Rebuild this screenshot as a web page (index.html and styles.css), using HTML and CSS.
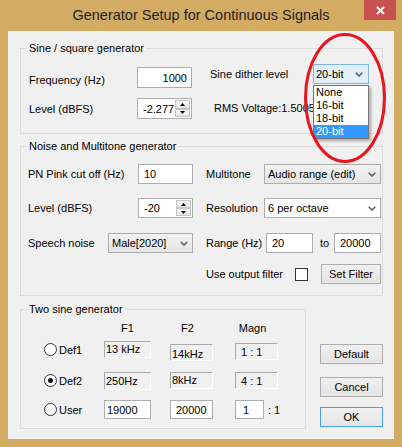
FILE: index.html
```html
<!DOCTYPE html>
<html lang="en">
<head>
    <meta charset="UTF-8">
    <title>Generator Setup for Continuous Signals</title>
    <link rel="stylesheet" href="styles.css">
</head>
<body>
<div class="window">
    <div class="titlebar">
        <span class="title">Generator Setup for Continuous Signals</span>
        <span class="close"><svg width="9" height="9" viewBox="0 0 9 9"><path d="M1 1L8 8M8 1L1 8" stroke="#fff" stroke-width="2"/></svg></span>
    </div>

    <div class="client">
        <!-- sine / square -->
        <fieldset class="group wide g-sine">
            <legend>Sine / square generator</legend>
            <div class="sine-body">
                <div class="sine-left">
                    <div class="field">
                        <span class="lbl low">Frequency (Hz)</span>
                        <span class="edit tall w55 num">1000</span>
                    </div>
                    <div class="field">
                        <span class="lbl">Level (dBFS)</span>
                        <span class="edit tall w55 spin">-2.277
                            <span class="spinbtns">
                                <span class="sb"><svg width="5" height="3" viewBox="0 0 5 3"><path d="M0 3L2.5 0L5 3Z"/></svg></span>
                                <span class="sb"><svg width="5" height="3" viewBox="0 0 5 3"><path d="M0 0L2.5 3L5 0Z"/></svg></span>
                            </span>
                        </span>
                    </div>
                </div>
                <div class="sine-right">
                    <div class="field dither">
                        <span class="lbl">Sine dither level</span>
                        <div class="combo focus w56">
                            <span>20-bit</span>
                            <svg class="chev" width="8" height="5" viewBox="0 0 8 5"><path d="M0.7 0.7L4 4L7.3 0.7" fill="none" stroke="#5f5f5f" stroke-width="1.6"/></svg>
                            <ul class="droplist">
                                <li>None</li>
                                <li>16-bit</li>
                                <li>18-bit</li>
                                <li class="sel">20-bit</li>
                            </ul>
                        </div>
                    </div>
                    <div class="rms">RMS Voltage:1.5005</div>
                </div>
            </div>
        </fieldset>

        <!-- noise / multitone -->
        <fieldset class="group wide g-noise">
            <legend>Noise and Multitone generator</legend>
            <div class="noise-body">
                <div class="row">
                    <div class="lf">
                        <span class="lbl">PN Pink cut off (Hz)</span>
                        <span class="edit w55">10</span>
                    </div>
                    <div class="rf">
                        <span class="lbl">Multitone</span>
                        <div class="combo w117 push">
                            <span>Audio range (edit)</span>
                            <svg class="chev" width="8" height="5" viewBox="0 0 8 5"><path d="M0.7 0.7L4 4L7.3 0.7" fill="none" stroke="#5f5f5f" stroke-width="1.6"/></svg>
                        </div>
                    </div>
                </div>
                <div class="row r2">
                    <div class="lf">
                        <span class="lbl">Level (dBFS)</span>
                        <span class="edit w55 spin">-20
                            <span class="spinbtns">
                                <span class="sb"><svg width="5" height="3" viewBox="0 0 5 3"><path d="M0 3L2.5 0L5 3Z"/></svg></span>
                                <span class="sb"><svg width="5" height="3" viewBox="0 0 5 3"><path d="M0 0L2.5 3L5 0Z"/></svg></span>
                            </span>
                        </span>
                    </div>
                    <div class="rf">
                        <span class="lbl">Resolution</span>
                        <div class="combo white w117 push">
                            <span>6 per octave</span>
                            <svg class="chev" width="8" height="5" viewBox="0 0 8 5"><path d="M0.7 0.7L4 4L7.3 0.7" fill="none" stroke="#5f5f5f" stroke-width="1.6"/></svg>
                        </div>
                    </div>
                </div>
                <div class="row r3">
                    <div class="lf">
                        <span class="lbl">Speech noise</span>
                        <div class="combo w85">
                            <span>Male[2020]</span>
                            <svg class="chev" width="8" height="5" viewBox="0 0 8 5"><path d="M0.7 0.7L4 4L7.3 0.7" fill="none" stroke="#5f5f5f" stroke-width="1.6"/></svg>
                        </div>
                    </div>
                    <div class="rf">
                        <span class="lbl range-lbl">Range (Hz)</span>
                        <span class="edit w47">20</span>
                        <span class="to">to</span>
                        <span class="edit w47 push">20000</span>
                    </div>
                </div>
                <div class="row r4">
                    <div class="lf"></div>
                    <div class="rf">
                        <span class="lbl filter-lbl">Use output filter</span>
                        <span class="check"></span>
                        <span class="btn w60 push">Set Filter</span>
                    </div>
                </div>
            </div>
        </fieldset>

        <div class="bottom">
            <!-- two sine -->
            <fieldset class="group g-two">
                <legend>Two sine generator</legend>
                <div class="two-body">
                    <div class="trow head">
                        <span class="c0"></span>
                        <span class="c1"><span class="hd w47">F1</span></span>
                        <span class="c2"><span class="hd w43 back">F2</span></span>
                        <span class="c3"><span class="hd w43 back">Magn</span></span>
                    </div>
                    <div class="trow t1">
                        <span class="c0"><span class="radio"></span>Def1</span>
                        <span class="c1"><span class="ro w47">13 kHz</span></span>
                        <span class="c2"><span class="ro w43 down3">14kHz</span></span>
                        <span class="c3"><span class="ro w43 down2 pad">1 : 1</span></span>
                    </div>
                    <div class="trow t2">
                        <span class="c0"><span class="radio on"></span>Def2</span>
                        <span class="c1"><span class="ro w47 h18">250Hz</span></span>
                        <span class="c2"><span class="ro w43">8kHz</span></span>
                        <span class="c3"><span class="ro w43 pad">4 : 1</span></span>
                    </div>
                    <div class="trow t3">
                        <span class="c0"><span class="radio"></span>User</span>
                        <span class="c1"><span class="edit w47 h19 tight">19000</span></span>
                        <span class="c2"><span class="edit w43 h19">20000</span></span>
                        <span class="c3"><span class="edit w29 h19 wide-pad">1</span><span class="ratio">: 1</span></span>
                    </div>
                </div>
            </fieldset>

            <div class="buttons">
                <span class="btn w63">Default</span>
                <span class="btn w63 b2">Cancel</span>
                <span class="btn w63 b3 default">OK</span>
            </div>
        </div>
    </div>

    <svg class="mark" width="90" height="136" viewBox="0 0 90 136"><ellipse cx="45" cy="68" rx="39.5" ry="63.5" fill="none" stroke="#e8141e" stroke-width="3"/></svg>
</div>
</body>
</html>
```

FILE: styles.css
```css
body {
    margin: 0;
    font-family: "Liberation Sans", Arial, sans-serif;
    font-size: 11px;
    color: #000;
}
.window {
    position: relative;
    width: 402px;
    height: 447px;
    box-sizing: border-box;
    padding: 0 8px 8px;
    background-color: #d4ab62;
    display: flex;
    flex-direction: column;
}
.titlebar {
    height: 31px;
    margin: 0 -8px;
    display: grid;
    grid-template-columns: 38px 1fr 38px;
}
.title {
    grid-column: 2;
    text-align: center;
    font-size: 14.5px;
    line-height: 30px;
    color: #222;
}
.close {
    grid-column: 3;
    width: 32px;
    height: 20px;
    background-color: #c75050;
    display: flex;
    align-items: center;
    justify-content: center;
}
.client {
    flex: 1;
    background-color: #f0f0f0;
    padding: 10px 0 0 12px;
}

/* group boxes */
.group {
    margin: 0;
    padding: 0;
    min-width: 0;
    box-sizing: border-box;
    border: 1px solid #dcdcdc;
}
.group legend {
    margin-left: 6px;
    padding: 0 2px;
    line-height: 14px;
}
.wide {
    width: 363px;
}
.g-sine {
    height: 93px;
}
.g-noise {
    height: 157px;
    margin-top: 5px;
}
.g-two {
    width: 286px;
    height: 127px;
}

/* common controls */
.lbl {
    white-space: nowrap;
}
.low {
    padding-top: 4px;
}
.edit {
    display: flex;
    align-items: center;
    height: 20px;
    box-sizing: border-box;
    border: 1px solid #abadb3;
    background-color: #fff;
    padding: 0 4px 0 5px;
    white-space: nowrap;
}
.tall {
    height: 21px;
}
.h19 {
    height: 19px;
}
.tight {
    padding-left: 2px;
}
.wide-pad {
    padding-left: 7px;
}
.num {
    justify-content: flex-end;
}
.spin {
    padding-right: 0;
}
.spinbtns {
    margin-left: auto;
    width: 16px;
    height: 100%;
    display: flex;
    flex-direction: column;
    justify-content: space-between;
    padding: 1px 0;
    box-sizing: border-box;
}
.sb {
    height: 8px;
    margin-right: 1px;
    border: 1px solid #c4c4c4;
    background: linear-gradient(#f6f6f6, #e6e6e6);
    display: flex;
    align-items: center;
    justify-content: center;
}
.combo {
    position: relative;
    display: flex;
    align-items: center;
    height: 20px;
    box-sizing: border-box;
    border: 1px solid #acacac;
    background: linear-gradient(#f2f2f2, #e5e5e5);
    padding-left: 3px;
    white-space: nowrap;
}
.combo .chev {
    margin-left: auto;
    margin-right: 4px;
}
.combo.white {
    background: #fff;
}
.combo.focus {
    background: #e3effb;
    border-color: #7eb4ea;
    padding-left: 2px;
}
.combo.focus .chev {
    margin-right: 5px;
}
.droplist {
    position: absolute;
    left: -1px;
    top: 20px;
    width: 56px;
    margin: 0;
    padding: 0;
    list-style: none;
    background-color: #fff;
    border: 1px solid #767676;
    box-sizing: border-box;
    box-shadow: 2px 2px 3px rgba(0, 0, 0, 0.3);
    z-index: 2;
}
.droplist li {
    height: 13px;
    line-height: 13px;
    padding-left: 2px;
}
.droplist .sel {
    background-color: #3399ff;
    color: #fff;
}
.btn {
    display: flex;
    align-items: center;
    justify-content: center;
    height: 20px;
    box-sizing: border-box;
    border: 1px solid #acacac;
    background: linear-gradient(#f0f0f0, #e5e5e5);
}
.btn.default {
    border-color: #4a9eea;
}
.check {
    width: 13px;
    height: 13px;
    box-sizing: border-box;
    border: 1px solid #333;
    background-color: #fff;
}
.radio {
    width: 13px;
    height: 13px;
    box-sizing: border-box;
    border: 1px solid #333;
    border-radius: 50%;
    background-color: #fff;
    margin-right: 2px;
    display: inline-flex;
    align-items: center;
    justify-content: center;
}
.radio.on::after {
    content: "";
    width: 5px;
    height: 5px;
    border-radius: 50%;
    background-color: #111;
}
.ro {
    display: block;
    height: 17px;
    box-sizing: border-box;
    border: 1px solid;
    border-color: #a9a9a9 #fff #fff #a9a9a9;
    padding: 1px 0 0 1px;
    line-height: 13px;
    white-space: nowrap;
}
.ro.pad {
    padding-left: 5px;
    padding-top: 2px;
}
.h18 {
    height: 18px;
    padding-top: 2px;
}
.down3 {
    margin-top: 3px;
    padding-top: 3px;
}
.down2 {
    margin-top: 2px;
}
.push {
    margin-left: auto;
}

.w29 { width: 29px; }
.w43 { width: 43px; }
.w47 { width: 47px; }
.w55 { width: 55px; }
.w56 { width: 56px; }
.w60 { width: 60px; }
.w63 { width: 63px; }
.w85 { width: 85px; }
.w117 { width: 117px; }

/* sine group layout */
.sine-body {
    display: flex;
    align-items: flex-start;
    padding-left: 8px;
}
.sine-left {
    width: 163px;
    margin-top: 12px;
    display: flex;
    flex-direction: column;
    gap: 10px;
}
.field {
    display: flex;
    align-items: center;
    justify-content: space-between;
}
.sine-right {
    width: 159px;
    margin-left: 18px;
    margin-top: 9px;
}
.rms {
    margin: 17px 0 0 4px;
    line-height: 14px;
    white-space: nowrap;
}

/* noise group layout */
.noise-body {
    padding: 11px 0 0 7px;
}
.row {
    display: flex;
    align-items: center;
    height: 20px;
}
.r2 { margin-top: 14px; }
.r3 { margin-top: 15px; }
.r4 { margin-top: 11px; }
.lf {
    width: 165px;
    display: flex;
    align-items: center;
    justify-content: space-between;
}
.rf {
    width: 175px;
    margin-left: 13px;
    display: flex;
    align-items: center;
}
.range-lbl {
    width: 60px;
}
.to {
    margin-left: 7px;
}
.filter-lbl {
    width: 89px;
}

/* two sine layout */
.bottom {
    display: flex;
    align-items: flex-start;
    margin-top: 6px;
}
.two-body {
    padding: 5px 0 0 23px;
}
.trow {
    display: flex;
    align-items: center;
    height: 17px;
}
.trow.head {
    height: 14px;
}
.t1 {
    margin-top: 6px;
    align-items: flex-start;
}
.t1 .c0 {
    margin-top: 2px;
}
.t2 { margin-top: 14px; }
.t3 {
    margin-top: 11px;
    height: 19px;
}
.c0 {
    width: 60px;
    display: flex;
    align-items: center;
}
.c1 { width: 66px; }
.c2 { width: 65px; }
.c3 {
    display: flex;
    align-items: center;
}
.hd {
    display: block;
    text-align: center;
    line-height: 14px;
}
.hd.back {
    margin-left: -4px;
}
.ratio {
    margin-left: 4px;
}
.buttons {
    margin-left: 14px;
    padding-top: 42px;
    display: flex;
    flex-direction: column;
}
.b2 { margin-top: 13px; }
.b3 { margin-top: 10px; }

/* red marker drawn over the dialog */
.mark {
    position: absolute;
    left: 300px;
    top: 30px;
    z-index: 3;
}
```
